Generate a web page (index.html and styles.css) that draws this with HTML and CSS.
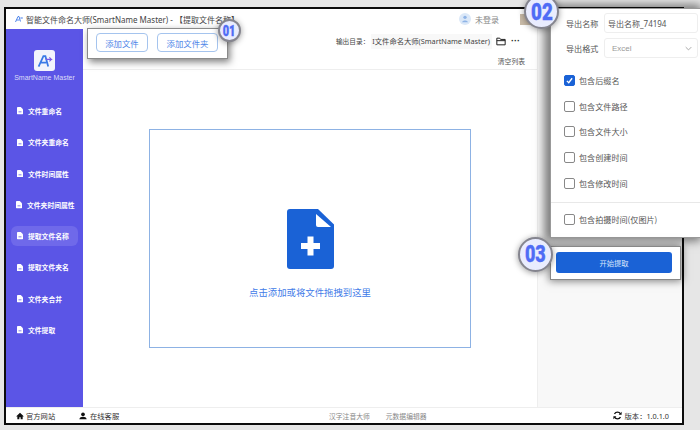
FILE: index.html
```html
<!DOCTYPE html>
<html lang="zh">
<head>
<meta charset="utf-8">
<title>SmartName Master</title>
<link rel="stylesheet" href="styles.css">
</head>
<body>
<div class="window">
  <header class="titlebar">
    <svg class="tlogo" viewBox="0 0 16 16"><path d="M1 14 6 3h2l3 10M3 10h6" fill="none" stroke="#3f7be8" stroke-width="1.800"/><path d="M9 6h6l-2-2M15 6l-2 2" fill="none" stroke="#3f7be8" stroke-width="1.200"/></svg>
    <span class="ttext">智能文件命名大师(SmartName Master) - 【提取文件名称】</span>
    <span class="user"><span class="avatar"><svg viewBox="0 0 12 12"><circle cx="6" cy="4" r="2" fill="#8fb4e6"/><path d="M2.500 10c.5-3 6.500-3 7 0z" fill="#8fb4e6"/></svg></span>未登录</span>
    <span class="photo"></span>
  </header>
  <div class="body">
    <aside class="sidebar">
      <div class="logo">
        <span class="logobox"><svg viewBox="0 0 20 20"><path d="M2 17 8 4h2.500l3.500 13M4.500 12h7" fill="none" stroke="#3a7ae6" stroke-width="2.200"/><path d="M11 8h7l-2.500-2.500M18 8l-2.500 2.500" fill="none" stroke="#7a5ae6" stroke-width="1.400"/></svg></span>
        <span class="logotext">SmartName Master</span>
      </div>
      <nav class="nav">
        <a class="item"><svg class="fi" viewBox="0 0 8 10"><use href="#doc"/></svg>文件重命名</a>
        <a class="item"><svg class="fi" viewBox="0 0 8 10"><use href="#doc"/></svg>文件夹重命名</a>
        <a class="item"><svg class="fi" viewBox="0 0 8 10"><use href="#doc"/></svg>文件时间属性</a>
        <a class="item wide"><svg class="fi" viewBox="0 0 8 10"><use href="#doc"/></svg>文件夹时间属性</a>
        <a class="item active"><svg class="fi" viewBox="0 0 8 10"><use href="#doc"/></svg>提取文件名称</a>
        <a class="item"><svg class="fi" viewBox="0 0 8 10"><use href="#doc"/></svg>提取文件夹名</a>
        <a class="item"><svg class="fi" viewBox="0 0 8 10"><use href="#doc"/></svg>文件夹合并</a>
        <a class="item"><svg class="fi" viewBox="0 0 8 10"><use href="#doc"/></svg>文件提取</a>
      </nav>
    </aside>
    <main class="main">
      <div class="toolbar">
        <div class="callout-tools">
          <button class="ghost">添加文件</button>
          <button class="ghost">添加文件夹</button>
          <span class="badge badge1"><b>01</b></span>
        </div>
        <div class="output">
          <span class="outlabel">输出目录：</span><span class="path">I文件命名大师(SmartName Master)</span>
          <svg class="folder" viewBox="0 0 12 10"><path d="M1 9V1h3.500l1 1.500H11V9zM1 4h10" fill="none" stroke="#222" stroke-width="1.200"/></svg>
          <span class="more">···</span>
        </div>
      </div>
      <div class="clearrow">清空列表</div>
      <div class="dropwrap">
        <div class="drop">
          <svg class="bigdoc" viewBox="0 0 47 60"><path d="M3 0H31L47 15.500V57a3 3 0 0 1-3 3H3a3 3 0 0 1-3-3V3a3 3 0 0 1 3-3z" fill="#1a62d6"/><path d="M29 5 44 18H31a2 2 0 0 1-2-2z" fill="#fff"/><path d="M23.500 27.500V46.500M14 37H33" fill="none" stroke="#fff" stroke-width="6"/></svg>
          <p class="hint">点击添加或将文件拖拽到这里</p>
        </div>
      </div>
    </main>
    <aside class="right"></aside>
  </div>
  <footer class="footer">
    <span class="flink"><svg viewBox="0 0 12 12" class="ficon"><path d="M6 1 0.500 6.200 1.500 7 2 6.500V11h3V8h2v3h3V6.500l.5.500 1-.8z" fill="#111"/></svg>官方网站</span>
    <span class="flink second"><svg viewBox="0 0 12 12" class="ficon"><circle cx="6" cy="3.500" r="2.800" fill="#111"/><path d="M0.500 11c0-3 3-4 5.500-4s5.500 1 5.500 4z" fill="#111"/></svg>在线客服</span>
    <span class="mid">
      <span>汉字注音大师</span><span>元数据编辑器</span>
    </span>
    <span class="version"><svg viewBox="0 0 12 12" class="vicon"><path d="M10 4A4.500 4.500 0 0 0 2 4M2 8a4.500 4.500 0 0 0 8 0" fill="none" stroke="#111" stroke-width="1.800"/><path d="M11.500 1v4h-4zM.5 11V7h4z" fill="#111"/></svg>版本：1.0.1.0</span>
  </footer>
</div>

<section class="panel">
  <div class="row"><label>导出名称</label><span class="field">导出名称_74194</span></div>
  <div class="row"><label>导出格式</label><span class="field select">Excel<svg viewBox="0 0 10 6"><path d="M1 1l4 4 4-4" fill="none" stroke="#999" stroke-width="1.200"/></svg></span></div>
  <div class="checks">
    <div class="check on"><span class="box"><svg viewBox="0 0 12 12"><path d="M2.500 6.500 5 9l4.500-6" fill="none" stroke="#fff" stroke-width="1.800"/></svg></span>包含后缀名</div>
    <div class="check"><span class="box"></span>包含文件路径</div>
    <div class="check"><span class="box"></span>包含文件大小</div>
    <div class="check"><span class="box"></span>包含创建时间</div>
    <div class="check"><span class="box"></span>包含修改时间</div>
  </div>
  <div class="lastwrap"><div class="check"><span class="box"></span>包含拍摄时间(仅图片)</div></div>
</section>
<span class="badge badge2"><b>02</b></span>
<div class="startcall"><button class="start">开始提取</button></div>
<span class="badge badge3"><b>03</b></span>

<svg class="defs" width="0" height="0"><defs><symbol id="doc" viewBox="0 0 8 10"><path d="M0 1a1 1 0 0 1 1-1h4l3 3v6a1 1 0 0 1-1 1H1a1 1 0 0 1-1-1z" fill="#fff"/><path d="M2 6h4v1H2z" fill="#5b55e6"/></symbol></defs></svg>
</body>
</html>
```

FILE: styles.css
```css
* { box-sizing: border-box; }
html, body { margin: 0; height: 100%; }
body {
  width: 700px; height: 430px; overflow: hidden; position: relative;
  background: #e6e6e6; padding: 7px 16px 5px 4px;
  font-family: "Noto Sans CJK SC", "Liberation Sans", sans-serif;
  color: #333;
}
.window {
  height: 418px; border: 2px solid #0c0c0c; background: #fff;
  display: flex; flex-direction: column;
}
.titlebar { height: 20px; display: flex; align-items: center; padding: 0 146px 0 9px; color: #444; flex: none; }
.tlogo { width: 8px; height: 8px; margin-right: 3px; flex: none; }
.ttext { flex: 1; white-space: nowrap; font-family: "Noto Sans", "Noto Sans CJK SC", sans-serif; font-size: 8px; }
.user { display: flex; align-items: center; gap: 4px; color: #888; font-size: 8px; margin-right: 21px; }
.avatar { width: 12px; height: 12px; border-radius: 50%; background: #dbe8f8; display: flex; align-items: center; justify-content: center; }
.avatar svg { width: 10px; height: 10px; }
.photo { width: 16px; height: 11px; background: #c9bba8; flex: none; }
.body { flex: 1; display: flex; min-height: 0; }
.sidebar { width: 77px; background: #5b55e6; color: #fff; flex: none; display: flex; flex-direction: column; }
.logo { display: flex; flex-direction: column; align-items: center; height: 72px; padding-top: 21px; flex: none; }
.logobox { width: 21px; height: 21px; background: #f2f4fc; border-radius: 3px; display: flex; align-items: center; justify-content: center; }
.logobox svg { width: 16px; height: 16px; }
.logotext { font-family: "Liberation Sans", sans-serif; font-size: 7px; margin-top: 3px; color: #dcdcf8; white-space: nowrap; }
.nav { display: flex; flex-direction: column; gap: 11.300px; padding: 0 5px; }
.item { height: 20px; display: flex; align-items: center; gap: 5px; padding-left: 6px; border-radius: 6px; font-size: 6.800px; font-weight: 700; white-space: nowrap; }
.item.wide { padding-left: 5px; }
.item.active { background: #6f69ea; }
.fi { width: 6px; height: 7.500px; flex: none; }
.main { flex: 1; min-width: 0; display: flex; flex-direction: column; }
.toolbar { height: 24px; display: flex; align-items: center; justify-content: space-between; padding: 0 17px 0 5px; flex: none; }
.callout-tools { display: flex; gap: 9px; height: 29px; padding: 4px 9px 6px 8px; position: relative; z-index: 3; background: #fff; box-shadow: 0 0 0 1px #8a8a8a, 2px 3px 7px 1px rgba(0,0,0,.5); align-self: flex-start; }
.ghost { height: 19px; width: 52px; border: 1px solid #a5c4ee; border-radius: 4px; background: #fff; color: #4f86e8; font: 8.400px "Noto Sans CJK SC", sans-serif; padding: 0; }
.ghost + .ghost { width: 61px; }
.output { display: flex; align-items: center; font-size: 7.300px; color: #444; }
.outlabel { font-size: 6.700px; }
.path { background: #f8f8f8; height: 15px; display: flex; align-items: center; padding: 0 2px 0 1px; white-space: nowrap; font-family: "Noto Sans", "Noto Sans CJK SC", sans-serif; font-size: 7.300px; margin: 0 4px 0 2px; }
.folder { width: 10px; height: 9px; margin-right: 5px; }
.more { font: 700 9px "Liberation Sans", sans-serif; color: #222; }
.clearrow { height: 17px; border-bottom: 1px solid #eee; text-align: right; padding: 0 12px 0 0; font-size: 6.800px; color: #555; line-height: 16px; flex: none; }
.dropwrap { flex: 1; padding: 59px 66px 58px; }
.drop { height: 219px; border: 1px solid #8db2e4; display: flex; flex-direction: column; align-items: center; padding-top: 79px; }
.bigdoc { width: 47px; height: 60px; }
.hint { margin: 16px 0 0; color: #3f7be8; font-size: 9.400px; }
.right { width: 145px; background: #f8f8f8; border-left: 1px solid #eee; flex: none; }
.footer { height: 16px; border-top: 1px solid #eee; display: flex; align-items: center; font-size: 7.300px; color: #333; padding: 0 13px 0 10px; flex: none; }
.flink { display: flex; align-items: center; gap: 2px; width: 63px; flex: none; }
.ficon { width: 8px; height: 8px; flex: none; }
.vicon { width: 9px; height: 9px; flex: none; }
.second { gap: 3px; }
.mid { display: flex; gap: 16px; margin-left: 187px; color: #888; font-size: 6.800px; }
.version { margin-left: auto; display: flex; align-items: center; gap: 3px; font-family: "Noto Sans", "Noto Sans CJK SC", sans-serif; }

.panel { position: absolute; left: 551px; top: 9px; width: 149px; height: 228px; background: #fff; box-shadow: 0 0 0 1px #999, -3px 0 9px 4px rgba(0,0,0,.5); padding: 4px 0 0 15px; font-size: 8.100px; color: #555; z-index: 4; }
.row { display: flex; align-items: center; gap: 5px; height: 20px; margin-bottom: 5px; }
.row label { width: 33px; white-space: nowrap; }
.field { width: 94px; height: 20px; border: 1px solid #eee; border-radius: 3px; display: flex; align-items: center; padding-left: 3px; font-family: "Noto Sans", "Noto Sans CJK SC", sans-serif; font-size: 8px; flex: none; }
.select { color: #999; justify-content: space-between; padding: 0 5px 0 7px; font-family: "Liberation Sans", sans-serif; }
.select svg { width: 7px; height: 5px; }
.checks { display: flex; flex-direction: column; gap: 14.700px; margin: 17px 0 0 -2px; }
.check { display: flex; align-items: center; gap: 4px; height: 11px; white-space: nowrap; }
.box { width: 11px; height: 11px; border: 1px solid #888; border-radius: 2px; background: #fff; display: flex; flex: none; }
.on .box { background: #1a62d6; border-color: #1a62d6; }
.lastwrap { margin: 13.500px 0 0 -15px; padding: 11px 0 0 13px; border-top: 1px solid #e8e8e8; }
.startcall { position: absolute; left: 551px; top: 247px; width: 129px; height: 32px; background: #fff; box-shadow: 0 0 0 1px #888, 0 0 8px 2px rgba(0,0,0,.5); z-index: 4; padding: 5px 8px 6px 5px; }
.start { width: 116px; height: 21px; border: 0; border-radius: 3px; background: #1a62d6; color: #d8e6fb; font: 7.300px "Noto Sans CJK SC", sans-serif; display: block; padding: 0; }
.badge { position: absolute; z-index: 6; border-radius: 50%; background: #e9ecfe; border: 2px solid #85858f; color: #4f6cf5; display: flex; align-items: center; justify-content: center; box-shadow: 0 1px 6px rgba(0,0,0,.4); }
.badge b { display: block; font-family: "Roboto", sans-serif; font-weight: 900; transform: scaleX(.78); line-height: 1; -webkit-text-stroke: .4px #4f6cf5; }
.badge1 { right: -14px; top: -10px; width: 23px; height: 23px; font-size: 14px; }
.badge2 { left: 524px; top: -6px; width: 35px; height: 35px; font-size: 24px; }
.badge3 { left: 518px; top: 237px; width: 35px; height: 35px; font-size: 23px; }
.defs { position: absolute; }
```
